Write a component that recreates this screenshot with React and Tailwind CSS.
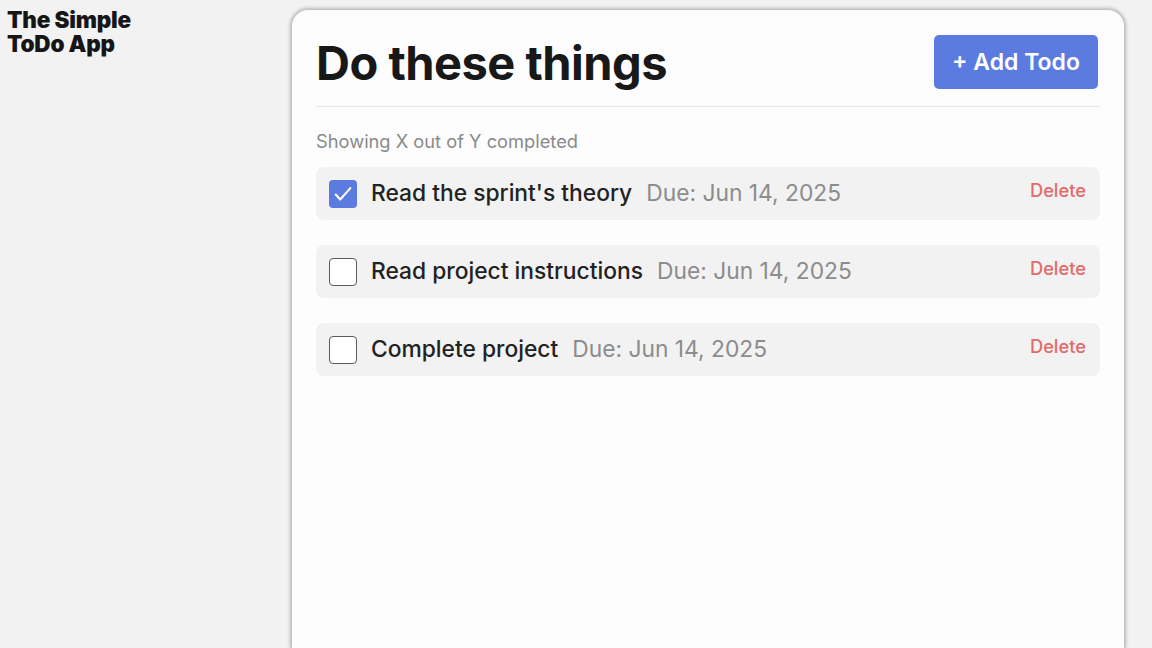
const TODOS = [
  { id: 1, name: "Read the sprint's theory", due: 'Jun 14, 2025', done: true },
  { id: 2, name: 'Read project instructions', due: 'Jun 14, 2025', done: false },
  { id: 3, name: 'Complete project', due: 'Jun 14, 2025', done: false },
];

const Check = ({ checked }) =>
  checked ? (
    <span className="w-7 h-7 rounded-[4px] bg-[#5b7be0] flex items-center justify-center flex-shrink-0">
      <svg width="22" height="22" viewBox="0 0 24 24" fill="none" stroke="white" strokeWidth="2.2" strokeLinecap="round" strokeLinejoin="round">
        <path d="M4 12.5l5 5.5L20 5.5" />
      </svg>
    </span>
  ) : (
    <span className="w-7 h-7 rounded-[4px] border-[1.5px] border-[#5a5a5a] bg-white flex-shrink-0" />
  );

export default function App() {
  return (
    <div className="min-h-screen h-[648px] overflow-hidden bg-[#f2f2f2] flex font-['Inter',sans-serif]">
      {/* Sidebar */}
      <aside className="w-[292px] flex-shrink-0 pl-[7px] pt-[8px]">
        <h1 className="text-[22.5px] leading-[24px] font-black tracking-[-0.2px] text-[#161616]">
          The Simple
          <br />
          ToDo App
        </h1>
      </aside>

      {/* Card */}
      <main className="w-[832px] mt-[10px] bg-[#fdfdfd] rounded-t-[16px] shadow-[0_0_4px_1px_rgba(0,0,0,0.35)] px-6 pt-[25px]">
        <div className="flex items-start justify-between pb-4 border-b border-[#e6e6e6]">
          <h2 className="text-[47px] leading-[54px] font-bold tracking-[-0.5px] text-[#181818] pt-[1px]">Do these things</h2>
          <button className="w-[164px] h-[54px] mr-[2px] rounded-[5px] bg-[#5b7be0] text-white text-[23px] font-semibold">
            + Add Todo
          </button>
        </div>

        <p className="mt-[23px] text-[18.3px] leading-[22px] text-[#8a8a8a]">Showing X out of Y completed</p>

        <ul className="mt-[15px] flex flex-col gap-[25px]">
          {TODOS.map((t) => (
            <li key={t.id} className="h-[53px] rounded-[8px] bg-[#f2f2f2] flex items-center pl-[13px] pr-[14px]">
              <Check checked={t.done} />
              <span className="ml-[14px] text-[22.8px] leading-[28px] mb-[2px] font-medium text-[#222]">{t.name}</span>
              <span className="ml-[14px] text-[22.8px] leading-[28px] mb-[2px] text-[#8c8c8c]">Due: {t.due}</span>
              <button className="ml-auto self-start mt-[10px] text-[18.3px] font-medium text-[#e36a6a]">Delete</button>
            </li>
          ))}
        </ul>
      </main>
    </div>
  );
}
